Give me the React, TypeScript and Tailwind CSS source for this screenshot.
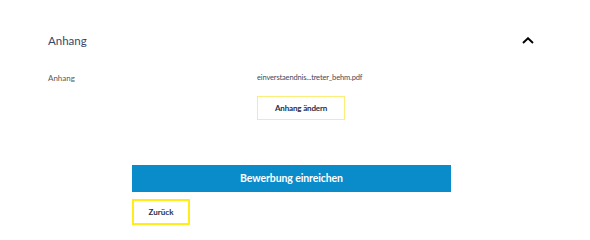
export default function App() {
  return (
    <div className="w-[590px] h-[234px] bg-white font-['Lato',sans-serif] overflow-hidden">
      {/* Section header */}
      <div className="pl-[48px] pr-[56px] pt-[30px] flex items-center justify-between h-[51px]">
        <h2 className="text-[11.5px] text-[#34466a] leading-none">Anhang</h2>
        <svg width="12" height="7" viewBox="0 0 12 7" className="text-black">
          <path d="M1 6 L6 1.2 L11 6" fill="none" stroke="currentColor" strokeWidth="1.9" />
        </svg>
      </div>

      {/* Attachment row */}
      <div className="pl-[48px] mt-[22px] flex items-start">
        <div className="w-[209px] text-[8px] text-[#5a5a5a] leading-[10px]">Anhang</div>
        <div className="flex flex-col items-start">
          <div className="text-[7.5px] tracking-[-0.15px] text-[#3c4a60] leading-[10px]">einverstaendnis...treter_behm.pdf</div>
          <button className="mt-[13px] w-[88px] h-[24px] border border-[#fbee7a] text-[8px] tracking-[-0.15px] font-bold text-[#1f2d4a] flex items-center justify-center">
            Anhang ändern
          </button>
        </div>
      </div>

      {/* Actions */}
      <div className="ml-[132px] w-[319px] mt-[45px] flex flex-col items-start">
        <button className="w-full h-[27px] bg-[#0a8ccb] text-white text-[10.5px] tracking-[-0.1px] font-bold flex items-center justify-center">
          Bewerbung einreichen
        </button>
        <button className="mt-[7px] w-[58px] h-[26px] border-2 border-[#ffec1a] text-[8px] font-bold text-[#1f2d4a] flex items-center justify-center">
          Zurück
        </button>
      </div>
    </div>
  );
}
